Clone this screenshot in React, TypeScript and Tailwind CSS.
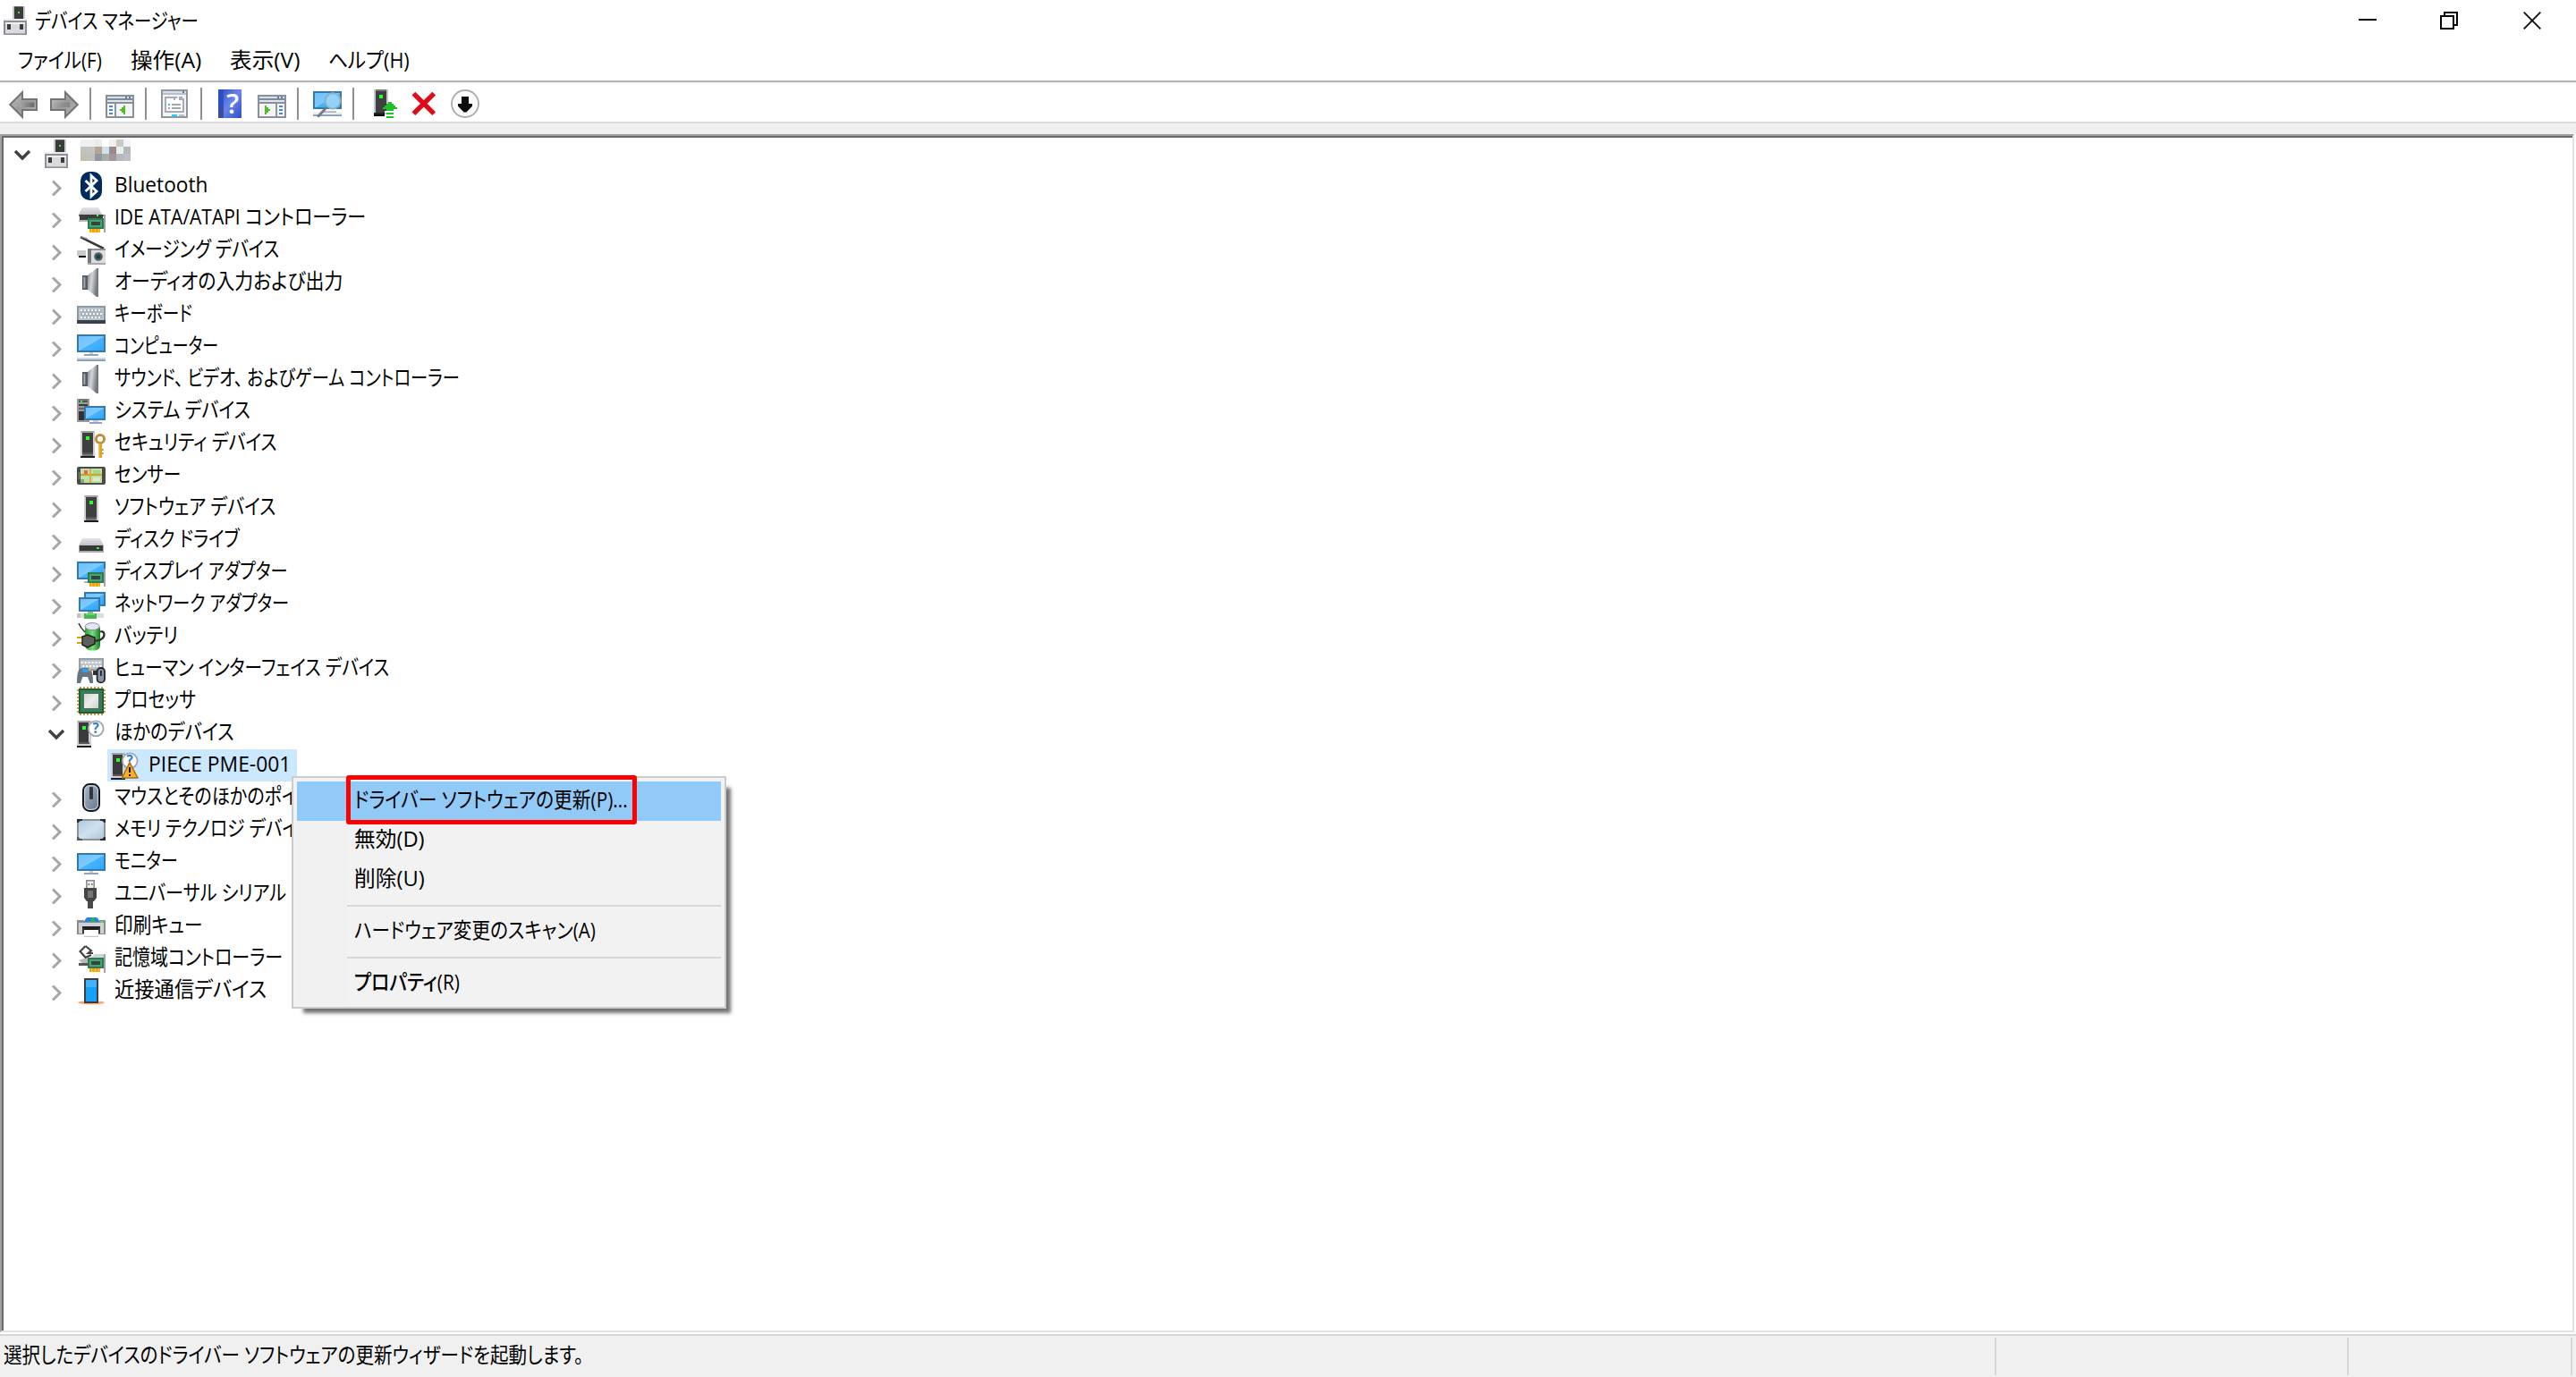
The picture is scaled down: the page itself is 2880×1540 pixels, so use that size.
import React, { useLayoutEffect, useRef, useState } from 'react';

type P = { children?: React.ReactNode };

/* ---------- text ---------- */

// Condenses a run of text horizontally so that it occupies `w` pixels.
function Fit({ w, children, className = '' }: { w: number; children: string; className?: string }) {
  const ref = useRef<HTMLSpanElement>(null);
  const [scale, setScale] = useState(1);
  useLayoutEffect(() => {
    if (ref.current) setScale(w / ref.current.offsetWidth);
  }, [w, children]);
  return (
    <span className="inline-block shrink-0 whitespace-nowrap" style={{ width: w }}>
      <span
        ref={ref}
        className={`inline-block origin-left whitespace-pre [font-feature-settings:'palt'] ${className}`}
        style={{ transform: `scaleX(${scale})` }}
      >
        {children.split(/(、)/).map((part, i) =>
          part === '、' ? (
            <span key={i} className="mr-1.5">
              {part}
            </span>
          ) : (
            part
          ),
        )}
      </span>
    </span>
  );
}

/* ---------- icon primitives (16-unit grid) ---------- */

function Icon({ children, smooth = false }: P & { smooth?: boolean }) {
  return (
    <svg
      viewBox="0 0 16 16"
      className="block size-8 shrink-0 overflow-visible"
      shapeRendering={smooth ? 'auto' : 'crispEdges'}
    >
      {children}
    </svg>
  );
}

// Each entry is "x y w h colour", separated by semicolons.
function Rects({ d }: { d: string }) {
  return (
    <>
      {d.split(';').map((r, i) => {
        const [x, y, w, h, f] = r.trim().split(' ');
        return <rect key={i} x={x} y={y} width={w} height={h} fill={f} />;
      })}
    </>
  );
}

function Defs() {
  return (
    <svg className="absolute size-0">
      <defs>
        <linearGradient id="screen" x1="0" y1="0" x2="1" y2="1">
          <stop offset="0" stopColor="#6fc0fb" />
          <stop offset="0.5" stopColor="#7fcbff" />
          <stop offset="0.52" stopColor="#49b3fd" />
          <stop offset="1" stopColor="#2fa7fb" />
        </linearGradient>
        <linearGradient id="cone" x1="0" x2="1" y1="0" y2="0.3">
          <stop offset="0" stopColor="#7f858d" />
          <stop offset="0.45" stopColor="#d4d6d9" />
          <stop offset="1" stopColor="#6b7078" />
        </linearGradient>
        <linearGradient id="arrow" x1="0" x2="1" y1="0" y2="1">
          <stop offset="0" stopColor="#c6c6c6" />
          <stop offset="0.5" stopColor="#9a9a9a" />
          <stop offset="1" stopColor="#b8b8b8" />
        </linearGradient>
        <linearGradient id="shaft" x1="0" x2="1" y1="0" y2="0">
          <stop offset="0" stopColor="#a6a6a6" />
          <stop offset="1" stopColor="#686868" />
        </linearGradient>
        <linearGradient id="help" x1="0" x2="1" y1="0" y2="1">
          <stop offset="0" stopColor="#2f49b8" />
          <stop offset="0.5" stopColor="#6a86ee" />
          <stop offset="1" stopColor="#2c4fc4" />
        </linearGradient>
        <linearGradient id="silver" x1="0" x2="1" y1="0" y2="1">
          <stop offset="0" stopColor="#d2d2d2" />
          <stop offset="0.5" stopColor="#ececec" />
          <stop offset="1" stopColor="#cfcfcf" />
        </linearGradient>
        <linearGradient id="drive" x1="0" x2="0" y1="0" y2="1">
          <stop offset="0" stopColor="#e6e6ea" />
          <stop offset="1" stopColor="#bfc1c6" />
        </linearGradient>
        <linearGradient id="mouse" x1="0" x2="1" y1="0" y2="1">
          <stop offset="0" stopColor="#a9b9ca" />
          <stop offset="1" stopColor="#66748a" />
        </linearGradient>
        <linearGradient id="pad" x1="0" x2="1" y1="0" y2="1">
          <stop offset="0" stopColor="#aecbe0" />
          <stop offset="0.5" stopColor="#cfe1ee" />
          <stop offset="1" stopColor="#adc8da" />
        </linearGradient>
        <linearGradient id="cell" x1="0" x2="1" y1="0" y2="0">
          <stop offset="0" stopColor="#2f9e35" />
          <stop offset="0.5" stopColor="#77e07a" />
          <stop offset="1" stopColor="#157a1d" />
        </linearGradient>
      </defs>
    </svg>
  );
}

const Screen = ({ x, y, w, h }: { x: number; y: number; w: number; h: number }) => (
  <>
    <rect x={x} y={y} width={w} height={h} fill="#3579aa" />
    <rect x={x + 1} y={y + 1} width={w - 2} height={h - 2} fill="url(#screen)" />
  </>
);

const Tower = ({ x }: { x: number }) => (
  <Rects
    d={`${x} 1 8 14 #cfd0d6;${x + 0.5} 1 7 1 #a4a4a8;${x + 1} 2 6 11 #3f3f3f;${x + 1} 13 6 1 #55555a;${x} 15 8 1 #1d1d1f;${x + 1} 14 6 1 #77777c;${x + 3} 4 2 2 #2bff2b`}
  />
);

const Card = ({ y = 8 }: { y?: number }) => (
  <Rects
    d={`15 ${y - 2} 1 ${18 - y} #a0a4a6;6 ${y} 9 6 #2c7c52;7 ${y + 1} 7 4 #4aa274;8 ${y + 2} 5 2 #23523a;9 ${y + 2} 3 2 #3c3f3e;7 ${y + 6} 6 2 #f5a300;8 ${y + 6} .5 2 #ffc64a;10 ${y + 6} .5 2 #ffc64a;12 ${y + 6} .5 2 #ffc64a`}
  />
);

/* ---------- device icons ---------- */

const HostIcon = () => (
  <Icon>
    <Rects d="6 0 7 8 #c9c9d0;7 0 5 7 #3b3b3b;7 0 5 .5 #6a6a6a;9 3 1 1 #35f135;1 7 13 1 #ececee;1 8 13 8 #8f8f96;2 9 11 6 #d9d9df;2 9 11 1 #f0f0f4;2 15 11 .5 #a9a9b0;3 10 2 3 #3b3b3b;10 10 2 3 #3b3b3b" />
  </Icon>
);

const BluetoothIcon = () => (
  <Icon smooth>
    <rect x="2" y="0" width="12" height="16" rx="5" fill="#00295c" />
    <path d="M4.8 5 L11 11 L8 13.8 V2.2 L11 5 L4.8 11" fill="none" stroke="#fff" strokeWidth="1.4" />
  </Icon>
);

const IdeIcon = () => (
  <Icon>
    <path d="M3 2h9l2 4H1z" fill="url(#drive)" />
    <Rects d="1 6 14 1 #77797c;1.5 6 13 3 #3b3d3e;1 9 6 1 #b9babd;11 6 1 1 #3dff3d" />
    <Card />
  </Icon>
);

const ImagingIcon = () => (
  <Icon smooth>
    <path d="M2 .6 L15 7" stroke="#3b3b3b" strokeWidth="1.3" />
    <path d="M2 .2l4 1.4" stroke="#9a9a9a" strokeWidth=".7" />
    <Rects d="0 8 5 3 #c9cacc;1 11 4 1 #111;6 7 10 9 #8f9093;7 8 9 7 #dcdde0;6 7 2 9 #77787a;6 15 10 1 #a7a8aa" />
    <circle cx="12" cy="11.5" r="2.4" fill="#5b5f63" />
    <circle cx="12" cy="11.5" r="1.3" fill="#15434f" />
  </Icon>
);

const SpeakerIcon = () => (
  <Icon smooth>
    <rect x="3" y="4" width="3" height="8" fill="#575d66" />
    <rect x="3.7" y="5" width="1" height="6" fill="#a0a8b2" />
    <path d="M6 4 L11 0 H12 V16 H11 L6 12z" fill="url(#cone)" />
    <rect x="11" y="0" width="1" height="16" fill="#757a82" />
  </Icon>
);

const KeyboardIcon = () => (
  <Icon>
    <Rects d="0 3 16 10 #8c99a2;1 4 14 7 #bac4cb;0 11 16 2 #38424a;2 5 12 5 #a9b4bc" />
    {[0, 1, 2, 3, 4, 5].map((i) => (
      <Rects key={i} d={`${2 + i * 2} 5 1 1 #f4f6f7;${3 + i * 2} 7 1 1 #f4f6f7;${2 + i * 2} 9 1 1 #f4f6f7`} />
    ))}
  </Icon>
);

const ComputerIcon = () => (
  <Icon>
    <Screen x={0} y={1} w={16} h={10} />
    <Rects d="7 11 2 1 #c9d2de;4 12 8 1 #93a3ba;0 14 16 1 #cfd7e1;0 15 16 1 #8f9fb6" />
  </Icon>
);

const SystemIcon = () => (
  <Icon>
    <Rects d="0 1 7 13 #9a9a9c;1 1 5 1 #7a7a7a;1 2 5 1 #555;1 4 5 1 #3a3a3a;1 6 3 1 #666;1 8 3 5 #333;2 2 1 1 #2bff2b;7 14 7 1 #93a3ba;9 13 3 1 #c9d2de" />
    <Screen x={4} y={5} w={12} h={8} />
  </Icon>
);

const SecurityIcon = () => (
  <Icon smooth>
    <Tower x={2} />
    <circle cx="13" cy="5.5" r="2.3" fill="#fff" stroke="#c08f35" strokeWidth="1.5" />
    <Rects d="12 8 2 8 #dda22a;14 11 .8 1 #c08f35;14 13 .8 1 #c08f35;12 8 .7 8 #f2c45e" />
  </Icon>
);

const SensorIcon = () => (
  <Icon smooth>
    <rect x="0" y="3" width="16" height="10" rx="1" fill="#4b4b4b" />
    <Rects d="2 4 12 8 #bfe0a4;2 7 12 1 #c9a326;7 4 1 8 #d6b13c;4 5 2 2 #f05b66;9 5 4 2 #a8d488;2 10 2 2 #88a874;9 9 4 2 #d4ecc2;1 6 .5 4 #888" />
  </Icon>
);

const SoftwareIcon = () => (
  <Icon>
    <Tower x={4} />
  </Icon>
);

const DiskIcon = () => (
  <Icon smooth>
    <path d="M3 7h10l2 4H1z" fill="url(#drive)" />
    <Rects d="1 11 14 4 #a9abae;1.5 11 13 3 #353a38;11 12 1.4 1 #38f038" />
  </Icon>
);

const DisplayIcon = () => (
  <Icon>
    <Screen x={0} y={2} w={16} h={10} />
    <Rects d="4 13 3 1 #a8b4c4" />
    <Card />
  </Icon>
);

const NetworkIcon = () => (
  <Icon>
    <Screen x={4} y={1} w={12} h={8} />
    <Screen x={1} y={4} w={12} h={8} />
    <Rects d="0 13 15 2.5 #dcdddd;0 13 2 2.5 #c4c4c4;4 13 7 3 #4ab552;6 12 3 1 #79c97e;5 13 5 1 #6ccf71" />
  </Icon>
);

const BatteryIcon = () => (
  <Icon smooth>
    <rect x="4.5" y="1" width="8.5" height="14.8" rx="3" fill="url(#cell)" />
    <ellipse cx="8.6" cy="2.3" rx="4" ry="2" fill="#e6e4f2" stroke="#8d8aa4" strokeWidth=".5" />
    <path d="M1 0.5 C2 3 2.5 3.5 4.5 5.5" fill="none" stroke="#3a3a3a" strokeWidth=".8" />
    <Rects d="0 8 3.2 1 #d9a400;0 11 3.2 1 #d9a400" />
    <path d="M3 8 L6 7 L10 8.5 V12 L6 14 L3 12.6z" fill="#5f5f5f" stroke="#1d1d1d" strokeWidth=".7" />
    <path d="M10 10.3 C14 10.5 15.5 8 15.2 6.3 C15 5 13.5 5 13 5.3" fill="none" stroke="#2b2b2b" strokeWidth="1.1" />
  </Icon>
);

const HidIcon = () => (
  <Icon smooth>
    <Rects d="1 2 14 7 #96a1a9;2 3 12 5 #bcc5cb" />
    {[0, 1, 2, 3, 4, 5].map((i) => (
      <Rects key={i} d={`${2.3 + i * 2} 4 1 1 #fff;${3.2 + i * 1.9} 6 1 1 #fff`} />
    ))}
    <path d="M1.5 8 Q4.5 6.8 7.5 8 Q9 9.5 9 16 H7.3 L6 12.5 H3.2 L2 16 H0 Q0 9.5 1.5 8z" fill="#68737f" />
    <Rects d="3 8 3.4 2 #2aa2f6;6.5 8 1.2 1.2 #f0b030;7 9.5 1 1 #e0523c;9 9 2.3 2.5 #2d3238" />
    <rect x="11.3" y="7.5" width="4.2" height="8.2" rx="2" fill="#8895a5" stroke="#20252b" strokeWidth=".9" />
    <rect x="13" y="9" width=".9" height="3" fill="#20252b" />
  </Icon>
);

const ProcessorIcon = () => (
  <Icon>
    {[0, 1, 2, 3, 4, 5, 6].map((i) => (
      <Rects
        key={i}
        d={`${1.5 + i * 2} 0 1 1 #cf9d3a;${1.5 + i * 2} 15 1 1 #cf9d3a;0 ${1.5 + i * 2} 1 1 #cf9d3a;15 ${1.5 + i * 2} 1 1 #cf9d3a`}
      />
    ))}
    <Rects d="1 1 14 14 #1f5a3c;2 2 12 12 #3b7a57" />
    <rect x="4" y="4" width="8" height="8" fill="url(#silver)" />
  </Icon>
);

const UnknownBody = () => (
  <>
    <Rects d="0 1 8 14 #cfd0d6;.5 1 7 1 #a4a4a8;1 2 5.5 11 #3a3a3a;1 13 6 1 #55555a;0 15 8 1 #1d1d1f;3 4 2 2 #2bff2b" />
    <circle cx="10.6" cy="5.4" r="4.2" fill="#fff" stroke="#a3a3a8" strokeWidth=".9" />
    <text x="10.6" y="8.2" textAnchor="middle" fontSize="7.6" fontWeight="700" fill="#2b7fc8" fontFamily="'Open Sans', sans-serif">
      ?
    </text>
  </>
);

const UnknownIcon = () => (
  <Icon smooth>
    <UnknownBody />
  </Icon>
);

const WarningIcon = () => (
  <Icon smooth>
    <UnknownBody />
    <path d="M10.5 6.4 L15 15 H6.2z" fill="#f7b02c" stroke="#a87214" strokeWidth=".8" strokeLinejoin="round" />
    <Rects d="10 9 1 3 #1a1200;10 13 1 1 #1a1200" />
  </Icon>
);

const MouseIcon = () => (
  <Icon smooth>
    <rect x="3.5" y=".5" width="9" height="15" rx="3.6" fill="url(#mouse)" stroke="#15171a" />
    <rect x="4.3" y="1.3" width="7.4" height="13.4" rx="3" fill="none" stroke="#c6d0da" strokeWidth=".6" />
    <rect x="7" y="2" width="2" height="7" rx=".6" fill="#33383e" />
  </Icon>
);

const MemoryIcon = () => (
  <Icon smooth>
    <rect x="0" y="2" width="16" height="12" rx="1.2" fill="#8b9299" />
    <Rects d="0 2 3 2 #2a2d30;13 2 3 2 #2a2d30;0 12 3 2 #555a5f;13 12 3 2 #2a2d30" />
    <rect x="1" y="3" width="14" height="10" rx="1.4" fill="url(#pad)" />
  </Icon>
);

const MonitorIcon = () => (
  <Icon>
    <Screen x={0} y={3} w={16} h={10} />
    <Rects d="7 13 2 1 #c9d2de;4 14 8 1 #93a3ba" />
  </Icon>
);

const UsbIcon = () => (
  <Icon smooth>
    <Rects d="5 0 5 5 #8c8c8c;5.8 .8 3.4 4 #efefef;6.3 2 .8 1 #777;8 2 .8 1 #777;6 12 3 4 #4a4a4a" />
    <path d="M4 4.5h7v5.5l-1.5 2h-4L4 10z" fill="#444" />
    <rect x="6" y="6" width="3" height="4" fill="#757575" />
  </Icon>
);

const PrinterIcon = () => (
  <Icon smooth>
    <path d="M4 5.5 Q5 3 6 3 H10.5 Q12 3 12.5 5.5z" fill="#1f86e8" />
    <path d="M8 3h2v2.5H7.5z" fill="#22b05c" />
    <path d="M0 4.5h4v1h8.5v-1H16V12.5H0z" fill="#8b8d8f" />
    <Rects d="1 6 14 6 #cfd0d1;13.2 5 1.4 1 #3cf03c;3 8 10 2 #1f1f1f;3 9 1 3 #3b3b3b;12 9 1 3 #3b3b3b;4 10 8 4 #fff;4 13.4 8 .6 #c7c7c7" />
  </Icon>
);

const StorageIcon = () => (
  <Icon smooth>
    <path d="M4.8 1 L8 3.6 L6.4 5 H9 M4.8 1 L1.8 4 L4.8 7.4 L8 6" fill="none" stroke="#444" strokeWidth="1.1" />
    <path d="M1 9 L4 8 H8 V12 H5z" fill="#b8babc" />
    <Rects d="1 10.5 5 1.5 #555" />
    <path d="M6 9 L10 5.5 H15 V13 H6z" fill="#cfd4d6" />
    <Card y={7.5} />
  </Icon>
);

const NfcIcon = () => (
  <Icon smooth>
    <ellipse cx="8" cy="14.6" rx="7.4" ry="1.1" fill="#ff8a4c" opacity=".75" />
    <Rects d="4 1 8 14 #3a3d42;5 2 6 12 #16a0f8;5 2 6 4 #40b4fb" />
  </Icon>
);

/* ---------- toolbar icons ---------- */

const BackIcon = () => (
  <Icon smooth>
    <path d="M.6 8.5 L7.5 1.6 V5.5 H15.5 V11.5 H7.5 V15.4z" fill="url(#arrow)" stroke="#747474" />
    <rect x="6" y="7.2" width="8.2" height="2.8" fill="url(#shaft)" />
  </Icon>
);

const ForwardIcon = () => (
  <Icon smooth>
    <path d="M15.4 8.5 L8.5 1.6 V5.5 H.5 V11.5 H8.5 V15.4z" fill="url(#arrow)" stroke="#747474" />
    <rect x="2" y="7.2" width="9" height="2.8" fill="url(#shaft)" opacity=".5" />
  </Icon>
);

const PaneFrame = () => (
  <Rects d="0 3 16 13 #8a9097;1 4 14 1 #d9dfe4;11 4 1 1 #5a7ba8;13 4 1 1 #5a7ba8;1 5 14 1 #7b8b9b;1 6 14 1 #dfe5ea;1 7 14 1 #8a9097;1 8 14 7 #f4f4f4" />
);

const TreePaneIcon = () => (
  <Icon>
    <PaneFrame />
    <Rects d="5 8 1 7 #8a97a6;2 9 2 1 #4a86c8;2 11 2 1 #4a86c8;2 13 2 1 #4a86c8;10 9 1 5 #55b934;9 10 1 3 #55b934;8 11 1 1 #55b934" />
  </Icon>
);

const ActionPaneIcon = () => (
  <Icon>
    <PaneFrame />
    <Rects d="10 8 1 7 #8a97a6;12 9 2 1 #4a86c8;12 11 2 1 #4a86c8;12 13 2 1 #4a86c8;4 9 1 5 #55b934;5 10 1 3 #55b934;6 11 1 1 #55b934" />
  </Icon>
);

const PropertiesIcon = () => (
  <Icon>
    <Rects d="0 0 15 16 #8f969d;1 1 13 14 #f3f4f4;1 1 13 1 #d9dee3;12 1 1 1 #5a7ba8;1 2 13 1 #b6bfc8;2 4 7 1 #a9a9b8;2 6 11 7 #a9a9b8;3 5 9 7 #fff;2 5 1 7 #a9a9b8;7 4 1 2 #a9a9b8;10 4 2 2 #a9a9b8;12 5 1 8 #a9a9b8;4 8 1 1 #18c4f0;6 8 5 1 #a0a6ac;4 10 1 1 #a0a6ac;6 10 5 1 #a0a6ac;6 14 3 1 #1fd0f8;10 14 3 1 #b9bfc4" />
  </Icon>
);

const HelpIcon = () => (
  <Icon smooth>
    <rect x="1" y="0" width="13" height="16" fill="url(#help)" />
    <rect x="1" y="0" width="3" height="16" fill="#2c4fc4" />
    <rect x="1" y="10" width="3" height="6" fill="#3a4fa0" />
    <text x="9" y="13.6" textAnchor="middle" fontSize="15.5" fontWeight="600" fill="#fff" fontFamily="'Open Sans', sans-serif">
      ?
    </text>
  </Icon>
);

const ScanIcon = () => (
  <Icon smooth>
    <Screen x={0} y={1} w={16} h={10} />
    <Rects d="6 12 7 1 #b5c0d0;0 14 16 1 #8fa0b8;0 13 16 .6 #dde3ea" />
    <path d="M7.6 10 L2.6 15.4" stroke="#6c7c8a" strokeWidth="1.4" />
    <circle cx="11" cy="6.4" r="4.3" fill="#92d2fb" stroke="#8fb0c4" strokeWidth="1" />
  </Icon>
);

const UpdateIcon = () => (
  <Icon>
    <Rects d="3 0 8 14 #c4c5ca;4 0 6 13 #404040;4 0 6 1 #77777a;6 3 2 2 #2bff2b;3 13 6 2 #222;3 14 6 1 #0c0c0c" />
    <Rects d="11 7 2 1 #22bd2b;10 8 4 1 #22bd2b;9 9 6 1 #22bd2b;8 10 8 1 #22bd2b;10 11 4 1 #22bd2b;10 13 4 1 #14c81e;10 15 4 1 #14c81e;9 12 6 1 #f2f2f2" />
  </Icon>
);

const RemoveIcon = () => (
  <Icon smooth>
    <path d="M2.2 2.3 L13.6 13.6 M13.6 2.3 L2.2 13.6" stroke="#e20a17" strokeWidth="2.7" />
  </Icon>
);

const DisableIcon = () => (
  <Icon smooth>
    <circle cx="8" cy="8" r="7.5" fill="#fbfbfb" stroke="#acacac" strokeWidth=".9" />
    <path d="M6 4h4v4h2v1.4L8.7 12.7H7.3L4 9.4V8h2z" fill="#0b0b0b" />
  </Icon>
);

/* ---------- tree ---------- */

function ChevronDown() {
  return (
    <svg viewBox="0 0 36 36" className="block size-9 shrink-0" fill="none" stroke="#404040" strokeWidth="3.4">
      <path d="M10 15 L18 23 L26 15" />
    </svg>
  );
}

function ChevronRight() {
  return (
    <svg viewBox="0 0 36 36" className="block size-9 shrink-0" fill="none" stroke="#a6a6a6" strokeWidth="3">
      <path d="M14 12.5 L22 20.5 L14 28.5" />
    </svg>
  );
}

type Node = { icon: () => React.JSX.Element; text: string; w: number; open?: boolean };

const before: Node[] = [
  { icon: BluetoothIcon, text: 'Bluetooth', w: 104 },
  { icon: IdeIcon, text: 'IDE ATA/ATAPI コントローラー', w: 281 },
  { icon: ImagingIcon, text: 'イメージング デバイス', w: 184 },
  { icon: SpeakerIcon, text: 'オーディオの入力および出力', w: 255 },
  { icon: KeyboardIcon, text: 'キーボード', w: 87 },
  { icon: ComputerIcon, text: 'コンピューター', w: 116 },
  { icon: SpeakerIcon, text: 'サウンド、ビデオ、およびゲーム コントローラー', w: 386 },
  { icon: SystemIcon, text: 'システム デバイス', w: 152 },
  { icon: SecurityIcon, text: 'セキュリティ デバイス', w: 182 },
  { icon: SensorIcon, text: 'センサー', w: 74 },
  { icon: SoftwareIcon, text: 'ソフトウェア デバイス', w: 180 },
  { icon: DiskIcon, text: 'ディスク ドライブ', w: 140 },
  { icon: DisplayIcon, text: 'ディスプレイ アダプター', w: 193 },
  { icon: NetworkIcon, text: 'ネットワーク アダプター', w: 195 },
  { icon: BatteryIcon, text: 'バッテリ', w: 71 },
  { icon: HidIcon, text: 'ヒューマン インターフェイス デバイス', w: 307 },
  { icon: ProcessorIcon, text: 'プロセッサ', w: 91 },
  { icon: UnknownIcon, text: 'ほかのデバイス', w: 134, open: true },
];

const after: Node[] = [
  { icon: MouseIcon, text: 'マウスとそのほかのポイ', w: 205 },
  { icon: MemoryIcon, text: 'メモリ テクノロジ デバイ', w: 205 },
  { icon: MonitorIcon, text: 'モニター', w: 71 },
  { icon: UsbIcon, text: 'ユニバーサル シリアル', w: 192 },
  { icon: PrinterIcon, text: '印刷キュー', w: 98 },
  { icon: StorageIcon, text: '記憶域コントローラー', w: 188 },
  { icon: NfcIcon, text: '近接通信デバイス', w: 170 },
];

function Row({ node }: { node: Node }) {
  const I = node.icon;
  return (
    <li className="flex h-9 items-center pl-[41px]">
      {node.open ? <ChevronDown /> : <ChevronRight />}
      <span className="ml-[5px]">
        <I />
      </span>
      <span className="relative -top-[2px] ml-[10px] flex leading-9">
        <Fit w={node.w}>{node.text}</Fit>
      </span>
    </li>
  );
}

const mosaic = [
  'bg-[#f0f0f0]', 'bg-[#f0f0f0]', 'bg-[#ebebe9]', 'bg-[#fefefc]', 'bg-[#f0f0f2]', 'bg-[#cdc9c2]', 'bg-[#eef3fc]',
  'bg-[#c2c2c2]', 'bg-[#c3c3c1]', 'bg-[#b3a594]', 'bg-[#d1e1e9]', 'bg-[#968a8e]', 'bg-[#e4eff3]', 'bg-[#b5b9b9]',
  'bg-[#c8beb0]', 'bg-[#c1c1bb]', 'bg-[#9297a0]', 'bg-[#a9aca9]', 'bg-[#a1979b]', 'bg-[#b4b9b7]', 'bg-[#bbbfc9]',
];

function Tree() {
  return (
    <ul className="text-2xl text-black">
      <li className="flex h-9 items-center pl-[3px]">
        <ChevronDown />
        <span className="ml-[5px]">
          <HostIcon />
        </span>
        <span className="mb-2 ml-[10px] grid w-14 grid-cols-7">
          {mosaic.map((c, i) => (
            <span key={i} className={`size-2 ${c}`} />
          ))}
        </span>
      </li>
      {before.map((n) => (
        <Row key={n.text} node={n} />
      ))}
      <li className="flex h-9 pl-[116px]">
        <span className="flex w-[212px] items-center bg-[#cce8ff] pl-1">
          <WarningIcon />
          <span className="relative -top-[2px] ml-[10px] leading-9">
            <Fit w={159}>PIECE PME-001</Fit>
          </span>
        </span>
      </li>
      {after.map((n) => (
        <Row key={n.text} node={n} />
      ))}
    </ul>
  );
}

/* ---------- context menu ---------- */

function MenuItem({ text, w, hot, bold }: { text: string; w: number; hot?: boolean; bold?: boolean }) {
  return (
    <div className={`flex h-11 items-center pl-16 leading-[44px] ${hot ? 'bg-[#91c9f7]' : ''}`}>
      <span className="relative -top-[2px]">
        <Fit w={w} className={bold ? 'font-medium' : ''}>
          {text}
        </Fit>
      </span>
    </div>
  );
}

const MenuRule = () => <div className="my-1.5 ml-14 h-0.5 bg-[#d7d7d7]" />;

function ContextMenu() {
  return (
    <div className="absolute left-[326px] top-[868px] w-[486px] border-2 border-[#cccccc] bg-[#f2f2f2] p-1 text-2xl text-black shadow-[9px_9px_4px_-4px_rgba(0,0,0,0.55)]">
      <div className="bg-[linear-gradient(to_right,#f0f0f0_56px,#f2f2f2_56px)]">
        <MenuItem text="ドライバー ソフトウェアの更新(P)..." w={306} hot />
        <MenuItem text="無効(D)" w={79} />
        <MenuItem text="削除(U)" w={79} />
        <MenuRule />
        <MenuItem text="ハードウェア変更のスキャン(A)" w={270} />
        <MenuRule />
        <MenuItem text="プロパティ(R)" w={118} bold />
      </div>
      <div className="absolute -top-[3px] left-[59px] h-[55px] w-[325px] rounded-[3px] border-[5.5px] border-[#ff0000]" />
    </div>
  );
}

/* ---------- window ---------- */

const Rule = () => <span className="mx-3 h-9 w-0.5 bg-[#8f8f8f]" />;

export default function App() {
  return (
    <div className="relative flex h-[1540px] w-[2880px] flex-col overflow-hidden bg-white font-['Open_Sans','Noto_Sans_CJK_JP',sans-serif] text-2xl text-black">
      <Defs />

      <header className="flex h-[46px] items-center justify-between">
        <div className="flex items-center pl-0.5">
          <HostIcon />
          <span className="relative ml-[5px] leading-[46px]">
            <Fit w={183}>デバイス マネージャー</Fit>
          </span>
        </div>
        <div className="flex items-center pr-[39px]">
          <svg viewBox="0 0 20 20" className="block size-5" shapeRendering="crispEdges">
            <rect y="8" width="20" height="2" fill="#000" />
          </svg>
          <svg
            viewBox="0 0 20 20"
            className="ml-[71px] block size-5"
            fill="none"
            stroke="#000"
            strokeWidth="2"
            shapeRendering="crispEdges"
          >
            <path d="M5 4V1H19V15H16M1 5H15V19H1z" />
          </svg>
          <svg viewBox="0 0 20 20" className="ml-[73px] block size-5" fill="none" stroke="#111" strokeWidth="1.9">
            <path d="M.7 .7L19.3 19.3M19.3 .7L.7 19.3" />
          </svg>
        </div>
      </header>

      <nav className="flex h-11 items-center pl-5 leading-[40px]">
        <span className="relative -top-px flex">
          <Fit w={94}>ファイル(F)</Fit>
          <span className="ml-8">
            <Fit w={79}>操作(A)</Fit>
          </span>
          <span className="ml-8">
            <Fit w={78}>表示(V)</Fit>
          </span>
          <span className="ml-8">
            <Fit w={91}>ヘルプ(H)</Fit>
          </span>
        </span>
      </nav>

      <div className="flex h-12 items-center border-b-2 border-t-2 border-b-[#dcdcdc] border-t-[#b4b4b4] pl-[10px] pt-1 shadow-[inset_0_2px_0_#f2f8fc]">
        <BackIcon />
        <span className="ml-3.5">
          <ForwardIcon />
        </span>
        <Rule />
        <span className="ml-1">
          <TreePaneIcon />
        </span>
        <Rule />
        <span className="ml-1">
          <PropertiesIcon />
        </span>
        <Rule />
        <span className="ml-1">
          <HelpIcon />
        </span>
        <span className="ml-3.5">
          <ActionPaneIcon />
        </span>
        <Rule />
        <span className="ml-1">
          <ScanIcon />
        </span>
        <Rule />
        <span className="ml-1">
          <UpdateIcon />
        </span>
        <span className="ml-3.5">
          <RemoveIcon />
        </span>
        <span className="ml-3.5">
          <DisableIcon />
        </span>
      </div>

      <div className="h-3 shrink-0 bg-[#f0f0f0]" />

      <main className="mr-0.5 h-[1340px] shrink-0 border-2 border-b-[#e3e3e3] border-l-[#a0a0a0] border-r-[#e3e3e3] border-t-[#a0a0a0]">
        <div className="h-full border-l-2 border-t-2 border-[#696969]">
          <Tree />
        </div>
      </main>

      <footer className="mt-0.5 flex h-12 shrink-0 border-t-2 border-[#d7d7d7] bg-[#f0f0f0] py-0.5 pr-1">
        <div className="flex w-[2232px] items-center border-r-2 border-[#d7d7d7] pl-1">
          <span className="relative -top-[2px] leading-[40px]">
            <Fit w={648}>選択したデバイスのドライバー ソフトウェアの更新ウィザードを起動します。</Fit>
          </span>
        </div>
        <div className="w-[394px] border-r-2 border-[#d7d7d7]" />
        <div className="w-[250px] border-r-2 border-[#d7d7d7]" />
      </footer>

      <ContextMenu />
    </div>
  );
}
